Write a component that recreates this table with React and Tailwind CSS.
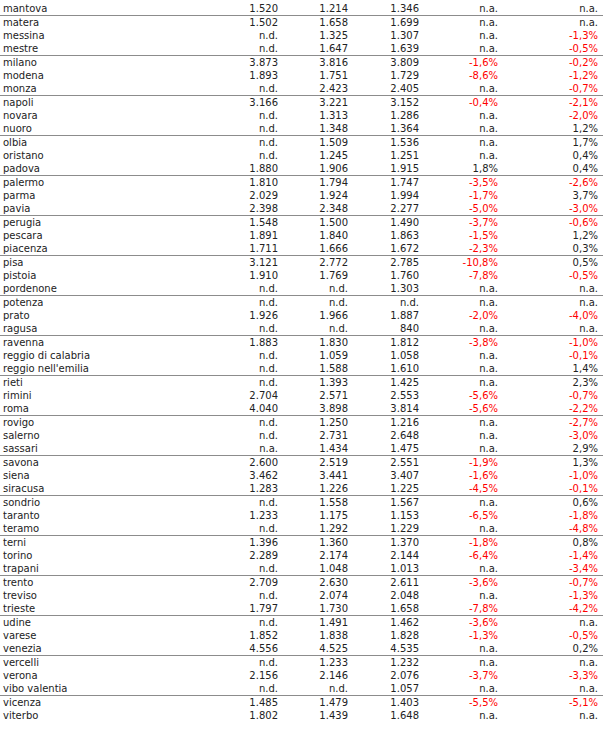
const raw = `mantova|1.520|1.214|1.346|n.a.|n.a.
matera|1.502|1.658|1.699|n.a.|n.a.
messina|n.d.|1.325|1.307|n.a.|-1,3%
mestre|n.d.|1.647|1.639|n.a.|-0,5%
milano|3.873|3.816|3.809|-1,6%|-0,2%
modena|1.893|1.751|1.729|-8,6%|-1,2%
monza|n.d.|2.423|2.405|n.a.|-0,7%
napoli|3.166|3.221|3.152|-0,4%|-2,1%
novara|n.d.|1.313|1.286|n.a.|-2,0%
nuoro|n.d.|1.348|1.364|n.a.|1,2%
olbia|n.d.|1.509|1.536|n.a.|1,7%
oristano|n.d.|1.245|1.251|n.a.|0,4%
padova|1.880|1.906|1.915|1,8%|0,4%
palermo|1.810|1.794|1.747|-3,5%|-2,6%
parma|2.029|1.924|1.994|-1,7%|3,7%
pavia|2.398|2.348|2.277|-5,0%|-3,0%
perugia|1.548|1.500|1.490|-3,7%|-0,6%
pescara|1.891|1.840|1.863|-1,5%|1,2%
piacenza|1.711|1.666|1.672|-2,3%|0,3%
pisa|3.121|2.772|2.785|-10,8%|0,5%
pistoia|1.910|1.769|1.760|-7,8%|-0,5%
pordenone|n.d.|n.d.|1.303|n.a.|n.a.
potenza|n.d.|n.d.|n.d.|n.a.|n.a.
prato|1.926|1.966|1.887|-2,0%|-4,0%
ragusa|n.d.|n.d.|840|n.a.|n.a.
ravenna|1.883|1.830|1.812|-3,8%|-1,0%
reggio di calabria|n.d.|1.059|1.058|n.a.|-0,1%
reggio nell'emilia|n.d.|1.588|1.610|n.a.|1,4%
rieti|n.d.|1.393|1.425|n.a.|2,3%
rimini|2.704|2.571|2.553|-5,6%|-0,7%
roma|4.040|3.898|3.814|-5,6%|-2,2%
rovigo|n.d.|1.250|1.216|n.a.|-2,7%
salerno|n.d.|2.731|2.648|n.a.|-3,0%
sassari|n.a.|1.434|1.475|n.a.|2,9%
savona|2.600|2.519|2.551|-1,9%|1,3%
siena|3.462|3.441|3.407|-1,6%|-1,0%
siracusa|1.283|1.226|1.225|-4,5%|-0,1%
sondrio|n.d.|1.558|1.567|n.a.|0,6%
taranto|1.233|1.175|1.153|-6,5%|-1,8%
teramo|n.d.|1.292|1.229|n.a.|-4,8%
terni|1.396|1.360|1.370|-1,8%|0,8%
torino|2.289|2.174|2.144|-6,4%|-1,4%
trapani|n.d.|1.048|1.013|n.a.|-3,4%
trento|2.709|2.630|2.611|-3,6%|-0,7%
treviso|n.d.|2.074|2.048|n.a.|-1,3%
trieste|1.797|1.730|1.658|-7,8%|-4,2%
udine|n.d.|1.491|1.462|-3,6%|n.a.
varese|1.852|1.838|1.828|-1,3%|-0,5%
venezia|4.556|4.525|4.535|n.a.|0,2%
vercelli|n.d.|1.233|1.232|n.a.|n.a.
verona|2.156|2.146|2.076|-3,7%|-3,3%
vibo valentia|n.d.|n.d.|1.057|n.a.|n.a.
vicenza|1.485|1.479|1.403|-5,5%|-5,1%
viterbo|1.802|1.439|1.648|n.a.|n.a.`;

const rows = raw.split("\n").map((l) => l.split("|"));
const groups = [[rows[0]]];
for (let i = 1; i < rows.length; i += 3) groups.push(rows.slice(i, i + 3));

function Cell({ v }) {
  const neg = v.startsWith("-");
  return (
    <div className={neg ? "text-right text-[#ff0000]" : "text-right"}>{v}</div>
  );
}

function Row({ r }) {
  return (
    <div className="grid grid-cols-[205px_70px_70px_71px_79px_100px] h-[13px] pl-[3px]">
      <div className="whitespace-nowrap">{r[0]}</div>
      <Cell v={r[1]} />
      <Cell v={r[2]} />
      <Cell v={r[3]} />
      <Cell v={r[4]} />
      <Cell v={r[5]} />
    </div>
  );
}

export default function App() {
  return (
    <div
      className="bg-white w-[610px] h-[729px] overflow-hidden pt-[2px] text-[10px] leading-[13px] text-[#222]"
      style={{ fontFamily: '"DejaVu Sans", Verdana, sans-serif' }}
    >
      <div className="w-[603px]">
        {groups.map((g, gi) => (
          <div
            key={gi}
            className={
              gi < groups.length - 1 ? "border-b border-[#8c8c8c]" : ""
            }
          >
            {g.map((r) => (
              <Row key={r[0]} r={r} />
            ))}
          </div>
        ))}
      </div>
    </div>
  );
}
